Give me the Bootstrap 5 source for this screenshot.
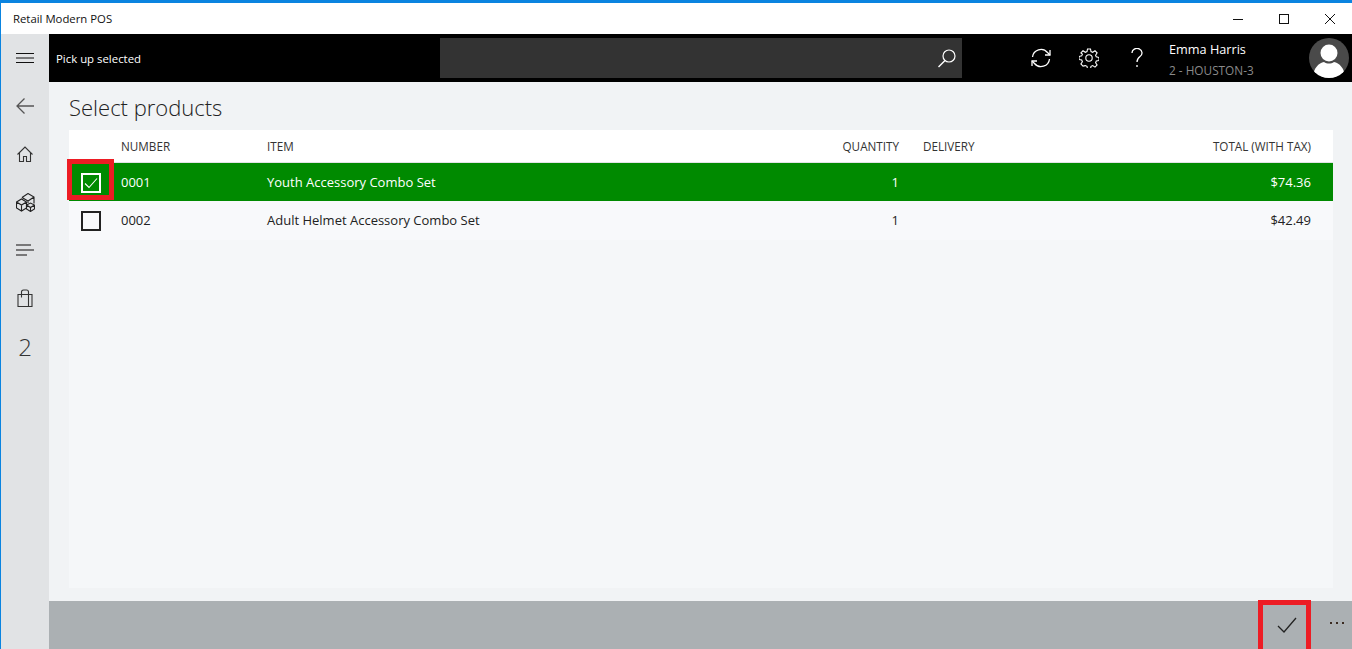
<!DOCTYPE html>
<html lang="en">
<head>
<meta charset="utf-8">
<title>Retail Modern POS</title>
<link href="https://cdn.jsdelivr.net/npm/bootstrap@5.3.0/dist/css/bootstrap.min.css" rel="stylesheet">
<style>
html,body{height:100%;overflow:hidden}
body{font-family:"Open Sans","Noto Sans","Liberation Sans",sans-serif;font-size:13px;color:#222;background:#fff}
.app-win{width:1352px;height:649px;border-top:3px solid #0a84e0;border-left:1px solid #0a84e0}
.title-bar{height:31px;padding-left:12px;font-size:11.35px;color:#111}
.win-btns{margin-right:-1px}
.win-btn{width:46px;height:31px}
.title-bar svg,.hdr svg,.rail svg,.action-bar svg{display:block}
.main-area{height:615px}
.rail{width:48px;background:#e1e3e5;color:#333}
.rail-item{height:48px;width:48px}
.rail-num{font-size:24px;font-weight:300;color:#333;line-height:1;padding-top:2px}
.content-col{width:1303px}
.hdr{height:48px;background:#000;color:#fff}
.hdr-title{width:391px;padding-left:7px;padding-top:2px;font-size:11.4px;font-weight:500}
.search-box{width:522px;height:40px;background:#333;padding-right:5px}
.hdr-icons{width:144px;margin-left:55px}
.hdr-ic{width:48px;height:48px}
.user-box{width:148px;padding-left:8px;padding-top:4px;font-size:12.7px}
.user-loc{font-size:11.8px;color:#8a8a8a;margin-top:3px}
.avatar{width:40px;height:40px;border-radius:50%;background:#4a4a4a;overflow:hidden}
.body-area{height:519px;background:#f1f3f5}
.page-title{font-size:22px;font-weight:300;height:48px;padding:7px 0 0 20px;color:#222;line-height:36px}
.grid-wrap{margin-left:20px;width:1264px;height:458px;background:#f5f7f9}
.sel-table{width:1264px;table-layout:fixed;margin:0;font-size:13px;--bs-table-bg:transparent;border-collapse:separate;border-spacing:0}
.sel-table th,.sel-table td{padding:1px 0 0;border:0;vertical-align:middle;font-weight:400}
.sel-table thead tr{background:#fff;height:33px}
.sel-table thead th{font-size:11.7px;color:#333;border-bottom:1px solid #e1e3e5}
.sel-table tbody tr.row-on{height:38px}
.sel-table tbody tr.row-on td{background:#008a00;color:#fff}
.sel-table tbody tr.row-off{height:39px}
.sel-table tbody tr.row-off td{background:#f8f9fb;color:#222}
.sel-table .c-check{width:52px;padding-left:12px}
.sel-table .c-num{width:146px}
.sel-table .c-item{width:auto}
.sel-table .c-qty{width:120px;text-align:right}
.sel-table .c-del{width:222px;padding-left:24px}
.sel-table .c-total{width:212px;text-align:right;padding-right:22px}
.tick-box{width:20px;height:20px;border:2px solid #222}
.tick-box.tick-on{border-color:#fff}
.red-a{position:absolute;left:-2px;top:29px;width:47px;height:41px;border:5px solid #ed1c24;pointer-events:none}
.red-b{position:absolute;left:1209px;top:-1px;width:53px;height:50px;border:5px solid #ed1c24;border-bottom-width:0;pointer-events:none}
.action-bar{height:48px;background:#abb0b3}
.act-check{width:53px;height:48px;padding-left:4px}
.act-more{width:41px;padding-left:19px;margin-bottom:4px}
</style>
</head>
<body>
<div class="app-win d-flex flex-column">
  <div class="title-bar d-flex align-items-center justify-content-between">
    <span>Retail Modern POS</span>
    <div class="d-flex win-btns">
      <div class="win-btn d-flex align-items-center justify-content-center"><svg width="12" height="12" viewBox="0 0 12 12"><path d="M1 6.500h10" stroke="#111" fill="none"/></svg></div>
      <div class="win-btn d-flex align-items-center justify-content-center"><svg width="12" height="12" viewBox="0 0 12 12"><rect x="1.500" y="1.500" width="9" height="9" stroke="#111" fill="none"/></svg></div>
      <div class="win-btn d-flex align-items-center justify-content-center"><svg width="12" height="12" viewBox="0 0 12 12"><path d="M1 1l10 10M11 1L1 11" stroke="#111" fill="none"/></svg></div>
    </div>
  </div>
  <div class="main-area d-flex">
    <div class="rail d-flex flex-column align-items-center">
      <div class="rail-item d-flex align-items-center justify-content-center"><svg width="18" height="10" viewBox="0 0 18 10"><path d="M0 .500h18M0 5h18M0 9.500h18" stroke="#111" stroke-width="1" fill="none"/></svg></div>
      <div class="rail-item d-flex align-items-center justify-content-center"><svg width="18" height="16" viewBox="0 0 18 16"><path d="M18 8H1M8.500 .500L1 8l7.500 7.500" stroke="#555" stroke-width="1.300" fill="none"/></svg></div>
      <div class="rail-item d-flex align-items-center justify-content-center"><svg width="16" height="16" viewBox="0 0 16 16"><path d="M.500 8.500L8 1l7.500 7.500M2.500 6.500v9h4v-5h3v5h4v-9" stroke="#333" stroke-width="1.100" fill="none"/></svg></div>
      <div class="rail-item d-flex align-items-center justify-content-center"><svg width="19" height="19" viewBox="0 0 19 19"><g stroke="#222" stroke-width="1.100" fill="none"><path d="M6 4.500L12 .5l6 3.500v6.500M6 4.500l6 3.500 6-4M12 8v2"/><path d="M.5 9l5-3 5 3v6l-5 3-5-3zM.5 9l5 3 5-3M5.500 12v6"/><path d="M10.500 12l4-2 4 2v4l-4 2.500-4-2.500zM10.500 12l4 2.500 4-2.500M14.500 14.500v4"/></g></svg></div>
      <div class="rail-item d-flex align-items-center justify-content-center"><svg width="18" height="12" viewBox="0 0 18 12"><path d="M0 1h15M0 6h18M0 11h11" stroke="#555" stroke-width="1.300" fill="none"/></svg></div>
      <div class="rail-item d-flex align-items-center justify-content-center"><svg width="16" height="18" viewBox="0 0 16 18"><path d="M1 5.500h14v12H1zM4.500 5.500V3a2 2 0 0 1 2-2h3a2 2 0 0 1 2 2v2.500M4.500 5.500v3M11.500 5.500v12" stroke="#333" stroke-width="1.100" fill="none"/></svg></div>
      <div class="rail-item d-flex align-items-center justify-content-center rail-num">2</div>
    </div>
    <div class="content-col d-flex flex-column">
      <div class="hdr d-flex align-items-center">
        <div class="hdr-title">Pick up selected</div>
        <div class="search-box d-flex align-items-center justify-content-end">
          <svg width="20" height="20" viewBox="0 0 20 20"><circle cx="12" cy="8" r="6" stroke="#fff" stroke-width="1.200" fill="none"/><path d="M8 12.500L1.500 19" stroke="#fff" stroke-width="1.500" fill="none"/></svg>
        </div>
        <div class="hdr-icons d-flex">
          <div class="hdr-ic d-flex align-items-center justify-content-center"><svg width="20" height="20" viewBox="0 0 20 20"><g stroke="#fff" stroke-width="1.300" fill="none"><path d="M1.500 9a8.500 8.500 0 0 1 15-4.500L19 7"/><path d="M18.500 11a8.500 8.500 0 0 1-15 4.500L1 13"/><path d="M19 2v5h-5M1 18v-5h5"/></g></svg></div>
          <div class="hdr-ic d-flex align-items-center justify-content-center"><svg width="20" height="20" viewBox="0 0 20 20"><g stroke="#fff" stroke-width="1.100" fill="none"><circle cx="10" cy="10" r="3.200"/><path d="M8.500 1h3l.5 2.600 1.700.7L16 2.800l2.100 2.100-1.500 2.300.7 1.700 2.700.6v3l-2.700.5-.7 1.700 1.500 2.300-2.100 2.100-2.300-1.500-1.700.7-.5 2.700h-3l-.5-2.700-1.700-.7L4 18.100 1.900 16l1.500-2.300-.7-1.700L0 11.500v-3l2.700-.6.700-1.700L1.900 4.900 4 2.800l2.300 1.500 1.700-.7z"/></g></svg></div>
          <div class="hdr-ic d-flex align-items-center justify-content-center"><svg width="12" height="20" viewBox="0 0 12 20"><path d="M1 5a5 4.500 0 1 1 8 3.500C7 10 6 11 6 14M6 17v2" stroke="#fff" stroke-width="1.300" fill="none"/></svg></div>
        </div>
        <div class="user-box">
          <div>Emma Harris</div>
          <div class="user-loc">2 - HOUSTON-3</div>
        </div>
        <div class="avatar flex-shrink-0"><svg width="40" height="40" viewBox="0 0 40 40"><circle cx="20" cy="15" r="8.500" fill="#fff"/><path d="M4 40c0-10 6-15 11-16 3 2 7 2 10 0 5 1 11 6 11 16z" fill="#fff"/></svg></div>
      </div>
      <div class="body-area">
        <div class="page-title">Select products</div>
        <div class="grid-wrap position-relative">
          <table class="table sel-table">
            <thead>
              <tr><th class="c-check"></th><th class="c-num">NUMBER</th><th class="c-item">ITEM</th><th class="c-qty">QUANTITY</th><th class="c-del">DELIVERY</th><th class="c-total">TOTAL (WITH TAX)</th></tr>
            </thead>
            <tbody>
              <tr class="row-on"><td class="c-check"><div class="tick-box tick-on d-flex align-items-center justify-content-center"><svg width="14" height="12" viewBox="0 0 14 12"><path d="M1 6.500L5 10.500 13 1.500" stroke="#fff" stroke-width="1.100" fill="none"/></svg></div></td><td>0001</td><td>Youth Accessory Combo Set</td><td class="c-qty">1</td><td class="c-del"></td><td class="c-total">$74.36</td></tr>
              <tr class="row-off"><td class="c-check"><div class="tick-box"></div></td><td>0002</td><td>Adult Helmet Accessory Combo Set</td><td class="c-qty">1</td><td class="c-del"></td><td class="c-total">$42.49</td></tr>
            </tbody>
          </table>
          <div class="red-a"></div>
        </div>
      </div>
      <div class="action-bar d-flex align-items-center position-relative justify-content-end">
        <div class="act-check d-flex align-items-center justify-content-center"><svg width="20" height="16" viewBox="0 0 20 16"><path d="M1 9l6 6L19 1" stroke="#222" stroke-width="1.300" fill="none"/></svg></div>
        <div class="red-b"></div>
        <div class="act-more"><svg width="14" height="4" viewBox="0 0 14 4"><g fill="#3a2a20"><rect y="1" width="2" height="2"/><rect x="6" y="1" width="2" height="2"/><rect x="12" y="1" width="2" height="2"/></g></svg></div>
      </div>
    </div>
  </div>
</div>
</body>
</html>
